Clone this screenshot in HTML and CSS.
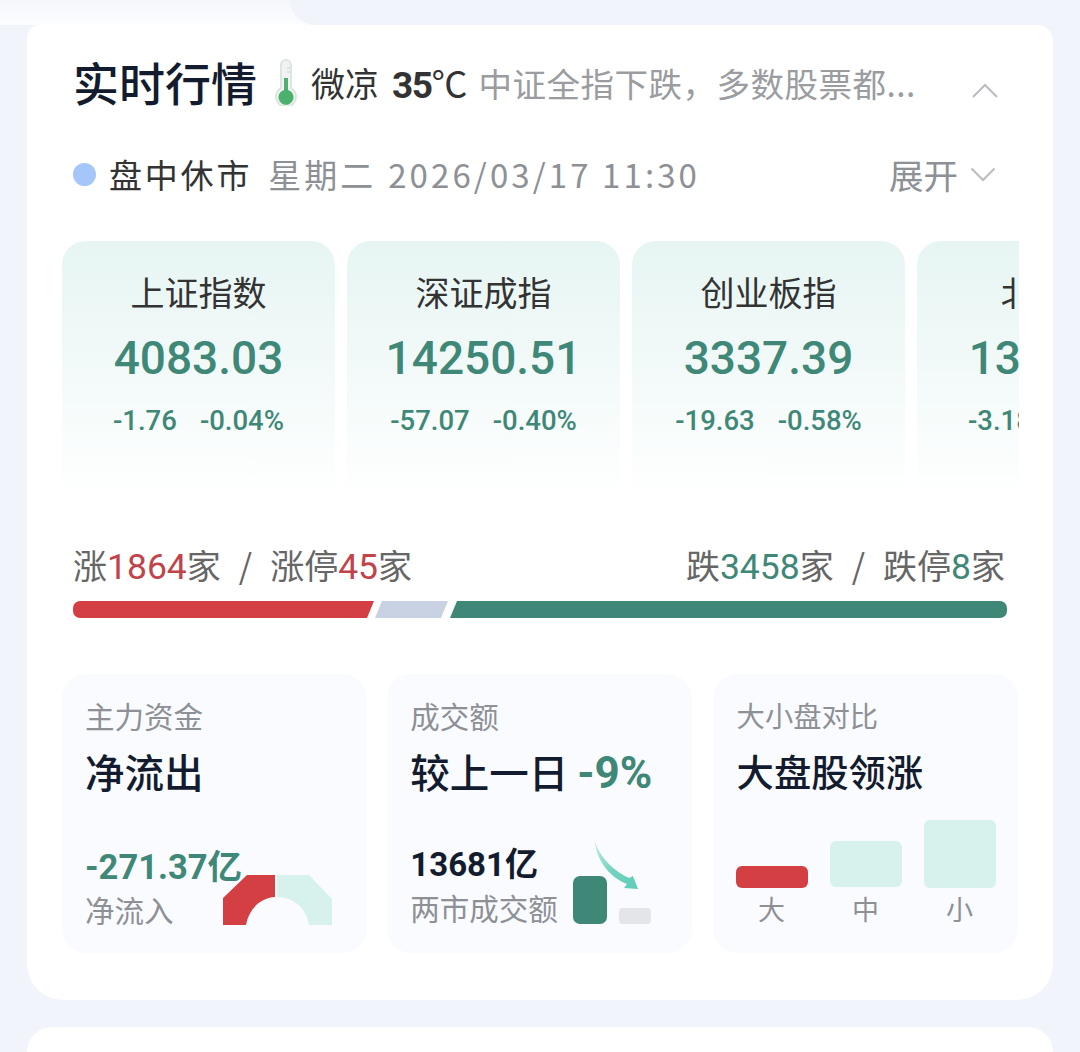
FILE: index.html
```html
<!DOCTYPE html>
<html lang="zh-CN">
<head>
<meta charset="utf-8">
<title>实时行情</title>
<link rel="stylesheet" href="styles.css">
</head>
<body>
<div class="topband"><div class="tab"></div></div>
<main class="page">
  <section class="card">
    <header class="head">
      <h1 class="title">实时行情</h1>
      <svg class="thermo" width="26" height="48" viewBox="0 0 26 48">
        <path d="M8 7a5 5 0 0 1 10 0v23a10 10 0 1 1-10 0z" fill="#f1f3f2" stroke="#dde5df" stroke-width="2"/>
        <path d="M11 20h4v12a7.500 7.500 0 1 1-4 0z" fill="#4cb06f"/>
        <path d="M14 10h3M14 14h3" stroke="#ccd2cf" stroke-width="1"/>
      </svg>
      <span class="mood">微凉</span>
      <span class="temp">35<span class="deg">℃</span></span>
      <span class="summary">中证全指下跌，多数股票都...</span>
      <svg class="chev-up" width="28" height="16" viewBox="0 0 28 16"><path d="M2 15 14 3l12 12" fill="none" stroke="#b9bcc1" stroke-width="2"/></svg>
    </header>
    <div class="meta">
      <i class="dot"></i>
      <span class="status">盘中休市</span>
      <span class="date">星期二</span>
      <span class="time">2026/03/17 11:30</span>
      <span class="expand">展开</span>
      <svg class="chev-down" width="26" height="15" viewBox="0 0 26 15"><path d="M1.500 1.500 13 13 24.500 1.500" fill="none" stroke="#b9bcc1" stroke-width="2"/></svg>
    </div>
    <div class="quotes">
      <article class="quote"><h2>上证指数</h2><strong>4083.03</strong><p><span>-1.76</span><span>-0.04%</span></p></article>
      <article class="quote"><h2>深证成指</h2><strong>14250.51</strong><p><span>-57.07</span><span>-0.40%</span></p></article>
      <article class="quote"><h2>创业板指</h2><strong>3337.39</strong><p><span>-19.63</span><span>-0.58%</span></p></article>
      <article class="quote"><h2>北证50</h2><strong>1328.60</strong><p><span>-3.18</span><span>-0.24%</span></p></article>
    </div>
    <div class="breadth">
      <span>涨<b class="up">1864</b>家<i class="sep">/</i>涨停<b class="up">45</b>家</span>
      <span>跌<b class="down">3458</b>家<i class="sep">/</i>跌停<b class="down">8</b>家</span>
    </div>
    <div class="bar"><i class="seg-up"></i><i class="seg-flat"></i><i class="seg-down"></i></div>
    <div class="panels">
      <article class="panel">
        <h3>主力资金</h3>
        <div class="big">净流出</div>
        <div class="foot">
          <div class="amount green">-271.37亿</div>
          <div class="note">净流入</div>
        </div>
        <svg class="donut" width="110" height="50" viewBox="0 0 110 50">
          <path d="M1 50V23L25 0h28v22C38 23 27 34 24 50z" fill="#d33f42"/>
          <path d="M55 0h32l23 24v26H87C85 34 72 22 55 22z" fill="#d7f1ec"/>
        </svg>
      </article>
      <article class="panel">
        <h3>成交额</h3>
        <div class="big">较上一日 <em>-9%</em></div>
        <div class="foot raised">
          <div class="amount">13681亿</div>
          <div class="note">两市成交额</div>
        </div>
        <div class="volume">
          <i class="vol-a"></i><i class="vol-b"></i>
          <svg class="arrow" width="50" height="52" viewBox="0 0 50 52">
            <defs><linearGradient id="arrowFade" x1="0" y1="0" x2="1" y2="1"><stop offset="0" stop-color="#c5ece4"/><stop offset=".5" stop-color="#74d2c0"/><stop offset="1" stop-color="#5ecdb8"/></linearGradient></defs>
            <path d="M1 0C7 17 20 29 35 36l4-2 5 13-14-1 3-4C17 36 3 20 1 0z" fill="url(#arrowFade)"/>
          </svg>
        </div>
      </article>
      <article class="panel compact">
        <h3>大小盘对比</h3>
        <div class="big">大盘股领涨</div>
        <div class="sizes">
          <div class="size"><i class="size-l"></i><span>大</span></div>
          <div class="size"><i class="size-m"></i><span>中</span></div>
          <div class="size"><i class="size-s"></i><span>小</span></div>
        </div>
      </article>
    </div>
  </section>
  <section class="card next"></section>
</main>
</body>
</html>
```
FILE: styles.css
```css
* { box-sizing: border-box; margin: 0; padding: 0; }
html, body { height: 1052px; overflow: hidden; }
body {
  background: #f1f4fb;
  font-family: "Noto Sans CJK SC", "Noto Sans", sans-serif;
  color: #131c2e;
}
i, em { font-style: normal; }

.topband {
  height: 25px;
  display: flex;
  background: linear-gradient(#f6f7fc, #fcfdfe);
}
.tab {
  flex: 1;
  margin-left: 290px;
  background: #f1f4fb;
  border-bottom-left-radius: 30px;
}

.page { padding: 0 27px; display: flex; flex-direction: column; gap: 27px; }
.card {
  background: #fff;
  height: 975px;
  border-radius: 12px 16px 36px 36px;
  padding: 27px 35px 0 35px;
  flex: none;
}
.next { height: 25px; border-radius: 36px 36px 0 0; padding: 0; }

.head { height: 60px; display: flex; align-items: center; margin-left: 11px; }
.title { font-size: 46px; font-weight: 500; line-height: 60px; margin-bottom: 3px; color: #131c2e; }
.thermo { margin-left: 16px; flex: none; }
.mood { margin-left: 12px; font-size: 34px; color: #333; }
.temp { margin-left: 13px; font-family: Roboto, sans-serif; font-size: 37px; font-weight: 700; color: #333; letter-spacing: -1.500px; }
.deg { font-weight: 400; font-family: "Noto Sans CJK SC", sans-serif; font-size: 36px; letter-spacing: 0; }
.summary { margin-left: 11px; font-size: 33.500px; color: #9a9c9f; white-space: nowrap; letter-spacing: .5px; }
.chev-up { margin-left: auto; margin-right: 19px; margin-top: 16px; }

.meta { height: 60px; margin-top: 32px; display: flex; align-items: center; margin-left: 11px; }
.dot { width: 23px; height: 23px; border-radius: 50%; background: #a4c6f8; }
.status { margin-left: 13px; font-size: 33px; letter-spacing: 2.800px; color: #333; }
.date { margin-left: 16px; font-size: 33px; letter-spacing: 3px; color: #8d9095; white-space: nowrap; }
.time { margin-left: 12px; font-size: 33px; letter-spacing: 3.100px; color: #8d9095; white-space: nowrap; }
.expand { margin-left: auto; font-size: 34.500px; color: #8d9095; }
.chev-down { margin-left: 12px; margin-right: 22px; }

.quotes { margin-top: 37px; width: 957px; display: flex; gap: 12px; overflow: hidden; }
.quote {
  width: 273px;
  height: 260px;
  flex: none;
  border-radius: 24px 24px 0 0;
  background: linear-gradient(#e6f5f3, #ffffff);
  text-align: center;
  padding-top: 25px;
}
.quote h2 { font-size: 34px; font-weight: 400; line-height: 52px; color: #333; }
.quote strong { display: block; margin-top: 13px; font-family: Roboto, sans-serif; font-size: 46px; font-weight: 500; line-height: 54px; color: #3f8878; }
.quote p { margin-top: 14px; display: flex; justify-content: center; gap: 23px; font-family: Roboto, sans-serif; font-size: 27.500px; font-weight: 500; line-height: 44px; color: #3f8878; }

.breadth { margin-top: 39px; margin-left: 11px; width: 932px; display: flex; justify-content: space-between; font-size: 34px; line-height: 50px; color: #666; white-space: nowrap; }
.breadth b { font-family: Roboto, sans-serif; font-size: 35.500px; font-weight: 400; }
.up { color: #c0444a; }
.down { color: #3f8878; }
.sep { margin: 0 18px; }

.bar { margin-top: 9px; margin-left: 11px; width: 934px; height: 17px; display: flex; }
.bar i { display: block; height: 100%; }
.seg-up { width: 301px; background: #d33f42; border-radius: 7px 0 0 7px; clip-path: polygon(0 0, 100% 0, calc(100% - 7px) 100%, 0 100%); }
.seg-flat { width: 73px; margin-left: 1px; background: #c8d2e2; clip-path: polygon(7px 0, 100% 0, calc(100% - 7px) 100%, 0 100%); }
.seg-down { flex: 1; margin-left: 2px; background: #3f8878; border-radius: 0 7px 7px 0; clip-path: polygon(7px 0, 100% 0, 100% 100%, 0 100%); }

.panels { margin-top: 56px; display: grid; grid-template-columns: 305px 305px 305px; column-gap: 20.300px; }
.panel { position: relative; height: 279px; border-radius: 24px; background: #fafbff; padding: 21px 23px 0; }
.panel h3 { font-size: 29.500px; font-weight: 400; line-height: 40px; color: #8d9095; }
.big { margin-top: 8px; font-size: 39.500px; font-weight: 500; line-height: 56px; color: #131c2e; white-space: nowrap; }
.big em { font-family: Roboto, sans-serif; font-size: 44px; font-weight: 700; color: #3f8878; }
.compact { padding-left: 24px; }
.compact h3 { font-size: 28.300px; }
.compact .big { font-size: 37.300px; }
.foot { position: absolute; left: 23px; bottom: 22px; }
.foot.raised { bottom: 24px; }
.amount { font-family: Roboto, "Noto Sans CJK SC", sans-serif; font-size: 33px; font-weight: 700; line-height: 44px; color: #131c2e; white-space: nowrap; }
.amount.green { font-size: 34.500px; color: #3f8878; }
.note { margin-top: -2px; font-size: 29.500px; line-height: 44px; color: #8d9095; white-space: nowrap; }
.donut { position: absolute; left: 160px; bottom: 28px; }

.volume { position: absolute; left: 186px; bottom: 29px; width: 80px; height: 82px; display: flex; align-items: flex-end; gap: 12px; }
.vol-a { width: 34px; height: 48px; border-radius: 7px; background: #3f8878; }
.vol-b { width: 32px; height: 16px; border-radius: 4px; background: #e3e5e8; }
.arrow { position: absolute; left: 21px; top: 0; }

.sizes { position: absolute; left: 23px; bottom: 23px; display: flex; align-items: flex-end; gap: 22px; }
.size { width: 72px; display: flex; flex-direction: column; align-items: center; }
.size i { display: block; width: 72px; border-radius: 6px; }
.size span { font-size: 27px; line-height: 42px; color: #8d9095; }
.size-l { height: 22px; background: #d33f42; }
.size-m { height: 46px; margin-bottom: 1px; background: #d7f1ec; }
.size-s { height: 68px; background: #d7f1ec; }
```
